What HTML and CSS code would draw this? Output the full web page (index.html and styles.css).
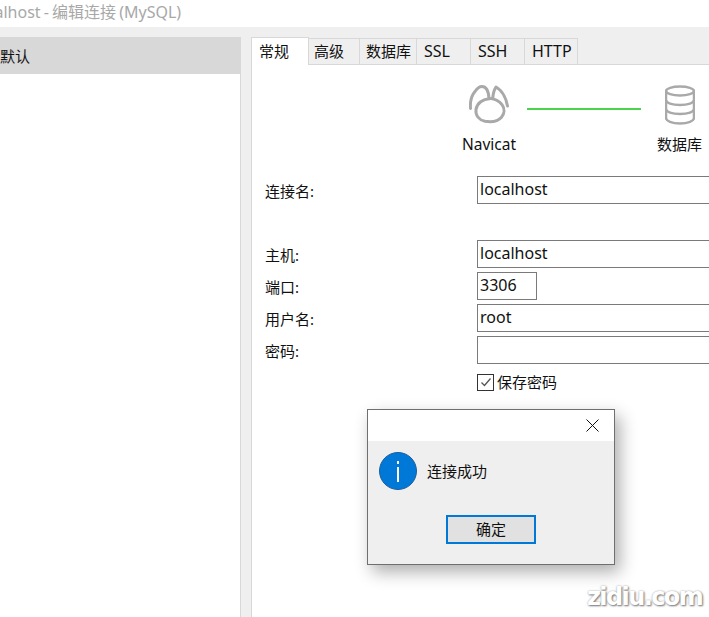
FILE: index.html
```html
<!DOCTYPE html>
<html lang="zh">
<head>
<meta charset="utf-8">
<title>编辑连接</title>
<link rel="stylesheet" href="styles.css">
</head>
<body>
<div class="window">
  <header class="titlebar"><span class="title">localhost - 编辑连接 (MySQL)</span></header>
  <div class="main">
    <aside class="sidebar">
      <div class="side-item"><span>默认</span></div>
    </aside>
    <section class="content">
      <nav class="tabs">
        <span class="tab active">常规</span>
        <span class="tab t-high">高级</span>
        <span class="tab t-db">数据库</span>
        <span class="tab t-ssl latin">SSL</span>
        <span class="tab t-ssl latin">SSH</span>
        <span class="tab t-http latin">HTTP</span>
      </nav>
      <div class="panel">
        <div class="diagram">
          <div class="node node-navicat">
            <svg class="ico-navicat" viewBox="0 0 40 40" width="40" height="40" fill="none" stroke="#a9a9a9" stroke-width="3" stroke-linecap="round" stroke-linejoin="round">
              <path d="M1.500 23.500C1 17 2 11 6 6.500 8 3.500 11 1.500 13 1.500c4 0 6.500 4 7 12"/>
              <path d="M38.500 21C37.500 15 34 6 27 2c-2 3-3 7-3.300 11.700"/>
              <path d="M20.500 13.700C14 14 8 18 7 24.500c-.7 6 3 10.500 9 11.700 6 1 13 0 16.500-4 3-3.500 3.500-8.500.5-12.500-2.500-3.500-7-6-13-6.500z"/>
            </svg>
            <span class="node-label">Navicat</span>
          </div>
          <div class="link"></div>
          <div class="node node-db">
            <svg class="ico-db" viewBox="0 0 30 40" width="30" height="40" fill="none" stroke="#a9a9a9" stroke-width="2.500">
              <ellipse cx="15" cy="6" rx="14" ry="4.500"/>
              <path d="M1 6v27c0 3 6 5.500 14 5.500s14-2.500 14-5.500V6"/>
              <path d="M1 15c0 3 6 5 14 5s14-2 14-5"/>
              <path d="M1 24c0 3 6 5 14 5s14-2 14-5"/>
            </svg>
            <span class="node-label">数据库</span>
          </div>
        </div>
        <form class="form">
          <label class="lbl">连接名:</label><div class="field">localhost</div>
          <div class="spacer"></div>
          <label class="lbl">主机:</label><div class="field">localhost</div>
          <label class="lbl">端口:</label><div class="field port">3306</div>
          <label class="lbl">用户名:</label><div class="field">root</div>
          <label class="lbl">密码:</label><div class="field"></div>
          <div class="check-cell">
            <span class="checkbox"><svg viewBox="0 0 14 14" width="14" height="14" fill="none" stroke="#555" stroke-width="1.300"><path d="M2.500 7.500l3 3 6-7"/></svg></span>
            <span class="check-text">保存密码</span>
          </div>
        </form>
      </div>
    </section>
  </div>
</div>
<div class="dialog">
  <div class="dialog-head">
    <svg class="dialog-close" viewBox="0 0 13 13" width="13" height="13" fill="none" stroke="#111" stroke-width="1"><path d="M.5.500l12 12M12.500.500l-12 12"/></svg>
  </div>
  <div class="dialog-body">
    <div class="msg">
      <svg class="info" viewBox="0 0 38 38" width="38" height="38"><circle cx="19" cy="19" r="18.500" fill="#0078d7" stroke="#1a5f9e" stroke-width="1"/><rect x="18" y="15" width="2" height="15" fill="#fff"/><rect x="18" y="9" width="2" height="3" fill="#fff"/></svg>
      <span class="msg-text">连接成功</span>
    </div>
    <div class="actions"><span class="btn">确定</span></div>
  </div>
</div>
<div class="watermark">zidiu.com</div>
</body>
</html>
```
FILE: styles.css
```css
* { box-sizing: border-box; }
html, body { margin: 0; height: 100%; overflow: hidden; }
body {
  background: #fff;
  color: #111;
  font: 15px/20px "Noto Sans", "Noto Sans CJK SC", sans-serif;
}
.window { height: 617px; width: 709px; display: flex; flex-direction: column; overflow: hidden; }
.titlebar { height: 27px; flex: none; background: #fff; overflow: hidden; white-space: nowrap; }
.title { display: block; margin-left: -27px; font-size: 16px; line-height: 24px; word-spacing: -1px; color: #a8a8a8; }
.main { flex: 1; display: flex; background: #efefef; padding-top: 10px; min-height: 0; }
.sidebar { width: 241px; flex: none; background: #fff; border-right: 1px solid #d8d8d8; }
.side-item { height: 37px; background: #d8d8d8; display: flex; align-items: center; }
.side-item span { font-size: 15px; }
.content { margin-left: 10px; width: 458px; flex: none; display: flex; flex-direction: column; min-height: 0; }
.tabs { display: flex; height: 28px; flex: none; align-items: flex-end; border-bottom: 1px solid #d8d8d8; position: relative; }
.tab {
  height: 26px;
  border: 1px solid #d8d8d8;
  border-left: 0;
  border-bottom: 0;
  font-size: 15px;
  line-height: 25px;
  padding-left: 5px;
  background: #efefef;
}
.tab.latin { font-size: 16px; }
.tab.active { width: 58px; height: 28px; margin-bottom: -1px; background: #fff; border-left: 1px solid #d8d8d8; padding-left: 7px; line-height: 26px; z-index: 1; }
.t-high { width: 51px; }
.t-db { width: 57px; padding-left: 6px; }
.t-ssl { width: 54px; padding-left: 7px; }
.t-http { width: 53px; padding-left: 7px; }
.panel { flex: 1; background: #fff; border-left: 1px solid #d8d8d8; min-height: 0; }
.diagram { height: 111px; padding-top: 20px; display: flex; align-items: flex-start; padding-left: 211px; }
.node { display: flex; flex-direction: column; align-items: center; }
.node-navicat { width: 52px; }
.node-db { width: 45px; margin-left: 16px; }
.node-label { font-size: 15px; line-height: 20px; margin-top: 9px; white-space: nowrap; }
.node-navicat .node-label { font-size: 15.500px; }
.link { width: 114px; height: 2px; background: #4bd44b; margin: 23px 0 0 12px; flex: none; }
.form {
  display: grid;
  grid-template-columns: 212px 320px;
  grid-auto-rows: 28px;
  row-gap: 4px;
  padding-left: 13px;
  align-items: center;
}
.lbl { font-size: 15px; line-height: 20px; padding-top: 2px; }
.field { height: 28px; border: 1px solid #7a7a7a; background: #fff; padding-left: 2px; font-size: 16px; line-height: 24px; }
.field.port { width: 60px; }
.spacer { grid-column: 1 / -1; height: 28px; }
.check-cell { grid-column: 2; display: flex; align-items: center; gap: 3px; }
.checkbox { width: 17px; height: 17px; border: 1px solid #333; display: flex; align-items: center; justify-content: center; flex: none; }
.check-text { font-size: 15px; }
.dialog {
  position: absolute;
  left: 367px;
  top: 409px;
  width: 248px;
  height: 156px;
  border: 1px solid #6f6f6f;
  background: #efefef;
  box-shadow: 5px 7px 16px rgba(0,0,0,.32);
  display: flex;
  flex-direction: column;
}
.dialog-head { height: 31px; background: #fff; display: flex; justify-content: flex-end; align-items: center; padding-right: 15px; flex: none; }
.dialog-body { flex: 1; display: flex; flex-direction: column; }
.msg { display: flex; align-items: center; padding: 11px 0 0 11px; gap: 10px; }
.msg-text { font-size: 15px; }
.actions { display: flex; justify-content: center; margin-top: 25px; }
.btn { width: 90px; height: 29px; border: 2px solid #0078d7; background: #e1e1e1; font-size: 15px; line-height: 24px; text-align: center; }
.watermark {
  position: absolute;
  left: 587px;
  top: 581px;
  font: bold 24px/32px "DejaVu Sans", sans-serif;
  letter-spacing: -1.600px;
  color: #fff;
  text-shadow: 1px 1px 2px #777, 0 0 2px #aaa;
}
```
